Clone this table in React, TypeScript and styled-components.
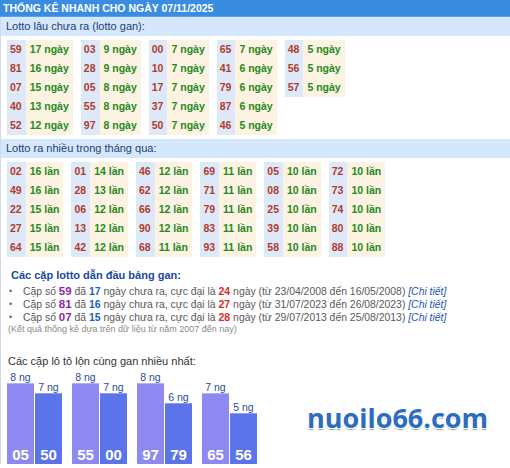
import React from "react";
import styled, { createGlobalStyle } from "styled-components";

const GlobalStyle = createGlobalStyle`
  html, body { margin: 0; padding: 0; background: #ffffff; }
  body { font-family: "Liberation Sans", Arial, sans-serif; width: 510px; height: 468px; overflow: hidden; }
`;

const Page = styled.div`
  width: 510px;
  display: flex;
  flex-direction: column;
`;

const Header = styled.div`
  height: 17px;
  line-height: 17px;
  background: #3a8ce0;
  border-bottom: 1px solid #5fa2e6;
  box-sizing: border-box;
  color: #ffffff;
  font-weight: bold;
  font-size: 10.5px;
  padding-left: 3px;
  white-space: nowrap;
`;

const Body = styled.div`
  border-left: 1px solid #cfdbe9;
  display: flex;
  flex-direction: column;
`;

const SubHeader = styled.div`
  height: 19px;
  line-height: 19px;
  background: #d5e7fa;
  color: #1b3f78;
  font-size: 11px;
  padding-left: 5px;
`;

const Groups = styled.div`
  display: flex;
  align-items: flex-start;
  gap: 8px;
  padding: 4px 0 4px 6px;
`;

const Group = styled.div`
  display: grid;
  grid-template-columns: auto auto;
`;

const NumCell = styled.div`
  height: 19px;
  line-height: 19px;
  background: #dde9f8;
  color: #b23b2c;
  font-weight: bold;
  font-size: 10.5px;
  padding: 0 4px 0 3px;
`;

const CountCell = styled.div`
  height: 19px;
  line-height: 19px;
  background: #fdf3e2;
  color: #1f8a22;
  font-weight: bold;
  font-size: 10.5px;
  padding: 0 4px;
  white-space: nowrap;
`;

const LeadSection = styled.div`
  padding: 7px 0 0 0;
`;

const LeadTitle = styled.div`
  color: #1a4a9e;
  font-weight: bold;
  font-size: 11px;
  line-height: 14px;
  padding-left: 10px;
  margin-bottom: 3px;
`;

const LeadList = styled.ul`
  list-style: none;
  margin: 0;
  padding: 0 0 0 8px;
`;

const LeadItem = styled.li`
  display: flex;
  align-items: center;
  font-size: 10.4px;
  line-height: 13px;
  color: #595959;
  white-space: nowrap;
`;

const Bullet = styled.span`
  width: 14px;
  color: #666;
  font-size: 9px;
`;

const Num = styled.b<{ $c: string }>`
  color: ${(p) => p.$c};
  font-weight: bold;
  font-size: ${(p) => (p.$c === "#8e24aa" ? "11.5px" : "10.5px")};
`;

const Detail = styled.a`
  color: #2156b0;
  font-style: italic;
  text-decoration: none;
`;

const Note = styled.div`
  font-size: 9px;
  line-height: 11px;
  color: #8a8a8a;
  padding-left: 7px;
`;

const PairTitle = styled.div`
  margin-top: 19px;
  font-size: 11px;
  line-height: 14px;
  color: #333333;
  padding-left: 7px;
`;

const BarsRow = styled.div`
  display: flex;
  align-items: flex-end;
  padding: 4px 0 0 6px;
  gap: 10px;
`;

const Pair = styled.div`
  display: flex;
  align-items: flex-end;
  gap: 1px;
`;

const BarCol = styled.div`
  width: 27px;
  display: flex;
  flex-direction: column;
  align-items: center;
`;

const BarLabel = styled.div`
  font-size: 10.5px;
  line-height: 11px;
  color: #2a4c9a;
  white-space: nowrap;
`;

const Bar = styled.div<{ $second: boolean }>`
  width: 27px;
  box-sizing: border-box;
  background: ${(p) => (p.$second ? "#5b74ea" : "#8d89f1")};
  border-top: 1px solid ${(p) => (p.$second ? "#8c9cf0" : "#b3b0f6")};
  display: flex;
  align-items: flex-end;
  justify-content: center;
  color: #ffffff;
  font-weight: bold;
  font-size: 15px;
  line-height: 15px;
  padding-bottom: 2px;
`;

const Logo = styled.div`
  margin-left: 40px;
  align-self: center;
  font-family: "Open Sans", sans-serif;
  font-weight: bold;
  font-size: 27px;
  color: #2c6cc0;
  text-shadow: 1px 0 0 #fff, -1px 0 0 #fff, 0 1px 0 #fff, 0 -1px 0 #fff,
    1px 1px 0 #fff, -1px 1px 0 #fff, 0 2px 1px #9a9a9a;
  position: relative;
  top: -1px;
`;

const gan: [string, string][][] = [
  [["59", "17"], ["81", "16"], ["07", "15"], ["40", "13"], ["52", "12"]],
  [["03", "9"], ["28", "9"], ["05", "8"], ["55", "8"], ["97", "8"]],
  [["00", "7"], ["10", "7"], ["17", "7"], ["37", "7"], ["50", "7"]],
  [["65", "7"], ["41", "6"], ["79", "6"], ["87", "6"], ["46", "5"]],
  [["48", "5"], ["56", "5"], ["57", "5"]],
];

const nhieu: [string, string][][] = [
  [["02", "16"], ["49", "16"], ["22", "15"], ["27", "15"], ["64", "15"]],
  [["01", "14"], ["28", "13"], ["06", "12"], ["13", "12"], ["42", "12"]],
  [["46", "12"], ["62", "12"], ["66", "12"], ["90", "12"], ["68", "11"]],
  [["69", "11"], ["71", "11"], ["79", "11"], ["83", "11"], ["93", "11"]],
  [["05", "10"], ["08", "10"], ["25", "10"], ["39", "10"], ["58", "10"]],
  [["72", "10"], ["73", "10"], ["74", "10"], ["80", "10"], ["88", "10"]],
];

const leads = [
  { n: "59", d: "17", m: "24", from: "23/04/2008", to: "16/05/2008" },
  { n: "81", d: "16", m: "27", from: "31/07/2023", to: "26/08/2023" },
  { n: "07", d: "15", m: "28", from: "29/07/2013", to: "25/08/2013" },
];

const pairs: [string, number, string, number][] = [
  ["05", 8, "50", 7],
  ["55", 8, "00", 7],
  ["97", 8, "79", 6],
  ["65", 7, "56", 5],
];

function NumTable({ data, unit }: { data: [string, string][][]; unit: string }) {
  return (
    <Groups>
      {data.map((g, i) => (
        <Group key={i}>
          {g.map(([n, c]) => (
            <React.Fragment key={n}>
              <NumCell>{n}</NumCell>
              <CountCell>
                {c} {unit}
              </CountCell>
            </React.Fragment>
          ))}
        </Group>
      ))}
    </Groups>
  );
}

function BarItem({ num, ng, second }: { num: string; ng: number; second: boolean }) {
  return (
    <BarCol>
      <BarLabel>{ng} ng</BarLabel>
      <Bar $second={second} style={{ height: ng * 10 + 1 }}>
        {num}
      </Bar>
    </BarCol>
  );
}

export default function App() {
  return (
    <Page>
      <GlobalStyle />
      <Header>THỐNG KÊ NHANH CHO NGÀY 07/11/2025</Header>
      <Body>
        <SubHeader>Lotto lâu chưa ra (lotto gan):</SubHeader>
        <NumTable data={gan} unit="ngày" />
        <SubHeader>Lotto ra nhiều trong tháng qua:</SubHeader>
        <NumTable data={nhieu} unit="lần" />
        <LeadSection>
          <LeadTitle>Các cặp lotto dẫn đầu bảng gan:</LeadTitle>
          <LeadList>
            {leads.map((l) => (
              <LeadItem key={l.n}>
                <Bullet>•</Bullet>
                <span>
                  Cặp số <Num $c="#8e24aa">{l.n}</Num> đã <Num $c="#1e5fc4">{l.d}</Num> ngày chưa ra, cực đại là{" "}
                  <Num $c="#e0261f">{l.m}</Num> ngày (từ {l.from} đến {l.to}) <Detail href="#">[Chi tiết]</Detail>
                </span>
              </LeadItem>
            ))}
          </LeadList>
          <Note>(Kết quả thống kê dựa trên dữ liệu từ năm 2007 đến nay)</Note>
        </LeadSection>
        <PairTitle>Các cặp lô tô lộn cùng gan nhiều nhất:</PairTitle>
        <BarsRow>
          {pairs.map(([a, na, b, nb]) => (
            <Pair key={a}>
              <BarItem num={a} ng={na} second={false} />
              <BarItem num={b} ng={nb} second={true} />
            </Pair>
          ))}
          <Logo>nuoilo66.com</Logo>
        </BarsRow>
      </Body>
    </Page>
  );
}
